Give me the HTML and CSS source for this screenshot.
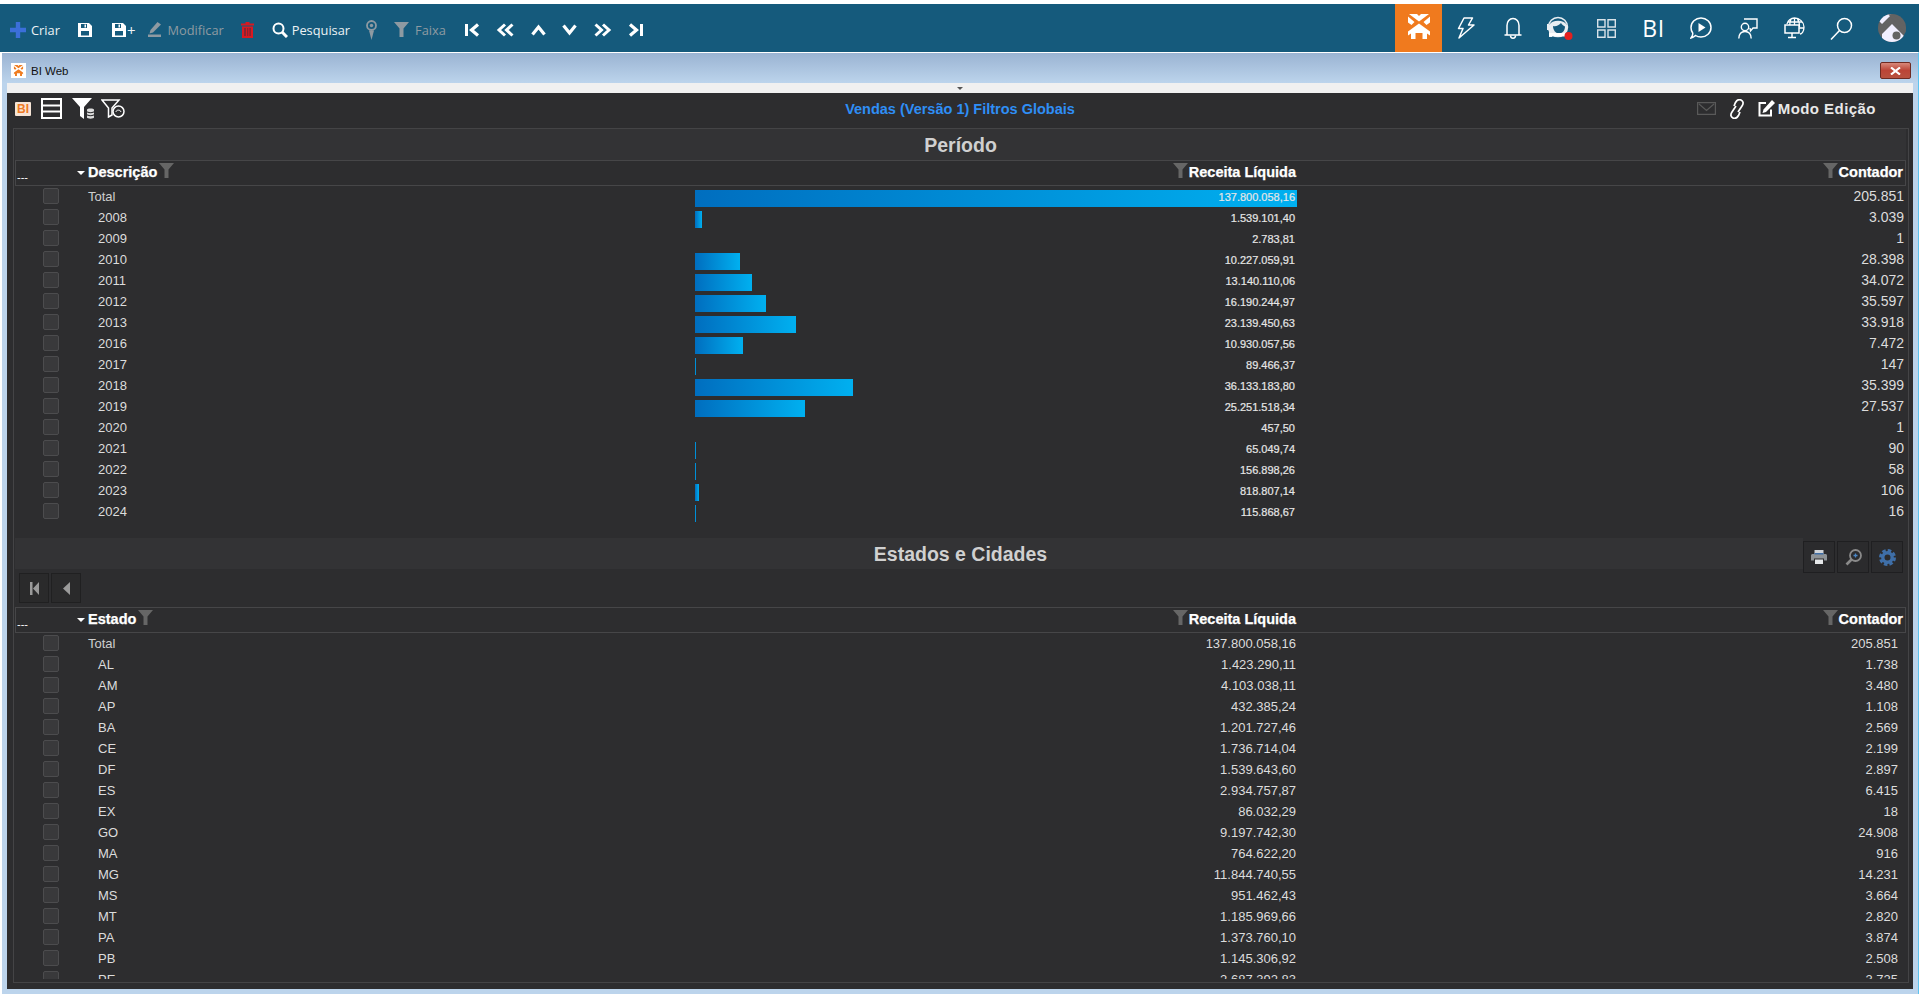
FILE: index.html
```html
<!DOCTYPE html>
<html lang="pt-BR">
<head>
<meta charset="utf-8">
<title>BI Web</title>
<link rel="stylesheet" href="styles.css">
</head>
<body>
<svg class="defs" aria-hidden="true">
  <symbol id="funnel" viewBox="0 0 15 15"><path d="M0 0H15L9.500 6.500V15H5.500V6.500Z"/></symbol>
  <symbol id="logo" viewBox="0 0 22 25"><path d="M1 0H9L11 2 13 0H21L11 7.500ZM0 2.500 6.500 8 3.500 11 0 8.500ZM22 2.500 15.500 8 18.500 11 22 8.500ZM11 9.500 22 17.500V21.500L19 19.500V25H14.500V19H7.500V25H3V19.500L0 21.500V17.500Z"/></symbol>
  <clipPath id="avatar-clip"><circle cx="14" cy="14" r="14"/></clipPath>
</svg>

<header class="toolbar">
  <div class="tb-left">
    <div class="tb-group">
      <svg class="ic" width="16" height="16" viewBox="0 0 16 16"><path fill="#3b6fd9" d="M5.800 0H10.200V5.800H16V10.200H10.200V16H5.800V10.200H0V5.800H5.800Z"/></svg>
      <span class="tb-text">Criar</span>
    </div>
    <svg class="ic" width="14" height="14" viewBox="0 0 14 14"><path fill="#fff" d="M0 0H11L14 3V14H0Z"/><path fill="#155a7c" d="M3 1H9V5H3ZM3 8H11V12.500H3Z"/><path fill="#fff" d="M6.500 1.500H8V4.500H6.500Z"/></svg>
    <div class="tb-group tight">
      <svg class="ic" width="14" height="14" viewBox="0 0 14 14"><path fill="#fff" d="M0 0H11L14 3V14H0Z"/><path fill="#155a7c" d="M3 1H9V5H3ZM3 8H11V12.500H3Z"/><path fill="#fff" d="M6.500 1.500H8V4.500H6.500Z"/></svg>
      <span class="tb-text plus">+</span>
    </div>
    <div class="tb-group muted tb-modify">
      <svg class="ic" width="13" height="15" viewBox="0 0 13 15"><path fill="#8e9aa2" d="M9.500 0 13 2.500 5 10.500 1.500 11.500 2.500 8ZM0 12.500H13V15H0Z"/></svg>
      <span class="tb-text">Modificar</span>
    </div>
    <svg class="ic" width="13" height="16" viewBox="0 0 13 16"><path fill="#d81921" d="M4.500 0H8.500V1.500H13V3.500H0V1.500H4.500ZM1 4.500H12V16H1Z"/><path fill="#8b2230" d="M3 6H5V14H3ZM6 6H7.300V14H6ZM8.300 6H10V14H8.300Z"/></svg>
    <div class="tb-group tb-search">
      <svg class="ic" width="16" height="16" viewBox="0 0 16 16"><circle cx="6.500" cy="6.500" r="5" fill="none" stroke="#fff" stroke-width="2"/><path d="M10 10 15 15" stroke="#fff" stroke-width="3"/></svg>
      <span class="tb-text">Pesquisar</span>
    </div>
    <svg class="ic tb-pin" width="11" height="20" viewBox="0 0 11 20"><circle cx="5.500" cy="5.500" r="4.500" fill="none" stroke="#8e9aa2" stroke-width="1.800"/><circle cx="5.500" cy="5.500" r="1.700" fill="#8e9aa2"/><path fill="#8e9aa2" d="M3 10.500H8L5.500 20Z"/></svg>
    <div class="tb-group muted tb-range">
      <svg class="ic funnel-bar" width="15" height="15"><use href="#funnel"/></svg>
      <span class="tb-text">Faixa</span>
    </div>
    <div class="tb-nav">
      <svg class="ic" width="15" height="14" viewBox="0 0 15 14"><path fill="#fff" d="M0 1H3V13H0Z"/><path d="M13 1.500 6.500 7 13 12.500" fill="none" stroke="#fff" stroke-width="3.200"/></svg>
      <svg class="ic" width="18" height="14" viewBox="0 0 18 14"><path d="M9 1.500 3 7 9 12.500M16.500 1.500 10.500 7 16.500 12.500" fill="none" stroke="#fff" stroke-width="3"/></svg>
      <svg class="ic" width="15" height="14" viewBox="0 0 15 14"><path d="M1.500 11.500 7.500 4 13.500 11.500" fill="none" stroke="#fff" stroke-width="3.200"/></svg>
      <svg class="ic" width="15" height="14" viewBox="0 0 15 14"><path d="M1.500 2.500 7.500 10 13.500 2.500" fill="none" stroke="#fff" stroke-width="3.200"/></svg>
      <svg class="ic" width="18" height="14" viewBox="0 0 18 14"><path d="M1.500 1.500 7.500 7 1.500 12.500M9 1.500 15 7 9 12.500" fill="none" stroke="#fff" stroke-width="3"/></svg>
      <svg class="ic" width="15" height="14" viewBox="0 0 15 14"><path fill="#fff" d="M12 1H15V13H12Z"/><path d="M2 1.500 8.500 7 2 12.500" fill="none" stroke="#fff" stroke-width="3.200"/></svg>
    </div>
  </div>
  <div class="tb-right">
    <div class="tb-cell home"><svg width="22" height="25" class="logo-white"><use href="#logo"/></svg></div>
    <div class="tb-cell"><svg width="18" height="22" viewBox="0 0 18 22" fill="none" stroke="#fff" stroke-width="1.500" stroke-linejoin="round"><path d="M7 1H15.500L11.500 8H17L2 21 6 11.500H1.500Z"/></svg></div>
    <div class="tb-cell"><svg width="18" height="23" viewBox="0 0 18 23" fill="none" stroke="#fff" stroke-width="1.500"><path d="M3 18V8.500C3 4.500 5.500 1.500 9 1.500S15 4.500 15 8.500V18M0.500 18H17.500"/><path d="M6.500 18.500C6.500 22 11.500 22 11.500 18.500"/></svg></div>
    <div class="tb-cell"><svg width="27" height="25" viewBox="0 0 27 25"><circle cx="12" cy="11" r="9.500" fill="none" stroke="#e9eef2" stroke-width="1.500"/><path fill="#e9eef2" d="M3 9C6 4 17 3 21 9V14L18 19H6V21H3ZM1 8H3V14H1Z"/><path fill="#155a7c" d="M7 10C10 11 13 9 15 7 16 9 18 10 19 10.500 19 15 16 17.500 13 17.500S7 14.500 7 10Z"/><path fill="#fff" d="M3 17H19V20.500H3Z"/><circle cx="22.500" cy="20" r="4" fill="#e4201f"/></svg></div>
    <div class="tb-cell"><svg width="19" height="19" viewBox="0 0 19 19" fill="none" stroke="#d8e2e8" stroke-width="1.400"><path d="M.7.700H8V8H.7ZM11 .7H18.300V8H11ZM.7 11H8V18.300H.7ZM11 11H18.300V18.300H11Z"/></svg></div>
    <div class="tb-cell"><span class="tb-bi">BI</span></div>
    <div class="tb-cell"><svg width="22" height="22" viewBox="0 0 22 22" fill="none" stroke="#fff" stroke-width="1.500"><path d="M11 1C16.500 1 21 5.300 21 10.500S16.500 20 11 20C9 20 7 19.500 5.500 18.500 4 20 2.500 20.800 1 21 2.500 19 3 17.500 2.700 16 1.600 14.500 1 12.500 1 10.500 1 5.300 5.500 1 11 1Z"/><path fill="#fff" stroke="none" d="M8.500 6 15.500 10.500 8.500 15Z"/></svg></div>
    <div class="tb-cell"><svg width="20" height="21" viewBox="0 0 20 21" fill="none" stroke="#fff" stroke-width="1.400"><path d="M6 1H19V10H15L12.500 13 12 10"/><circle cx="7" cy="9" r="3.700"/><path d="M.8 20.500C1 16 3.500 13.500 7 13.500S13 16 13.200 20.500"/></svg></div>
    <div class="tb-cell"><svg width="21" height="22" viewBox="0 0 21 22" fill="none" stroke="#fff" stroke-width="1.300"><path d="M3 7C3.500 3.500 7 1 10.500 1 15.500 1 20 5 20 10S17.500 17 16 17M7 2.500C6 4 5.800 6 5.800 8M13.500 2C15 4 15.500 7 15.500 10M4 5H18M14 11H20M10.500 1V8"/><path fill="#155a7c" stroke-width="1.500" d="M1 8H15V16H1Z"/><path stroke-width="1.500" d="M8 16V20M4 20.500H12"/></svg></div>
    <div class="tb-cell"><svg width="23" height="23" viewBox="0 0 23 23" fill="none" stroke="#fff" stroke-width="1.500"><circle cx="14.500" cy="8.500" r="7"/><path d="M9.500 13.500 1 22.500"/></svg></div>
    <div class="tb-cell avatar-cell"><svg width="28" height="28" viewBox="0 0 28 28"><circle cx="14" cy="14" r="14" fill="#636363"/><g clip-path="url(#avatar-clip)"><path fill="#f1efff" d="M7 0H14L4 10 0 6ZM14 10 28 24V28H4V20Z"/><path fill="#636363" d="M10 0H14L28 13V20Z"/></g><circle cx="18.500" cy="21.500" r="4" fill="#636363"/></svg></div>
  </div>
</header>

<div class="window">
  <div class="titlebar">
    <svg class="tab-logo" width="15" height="15" viewBox="0 0 15 15"><rect width="15" height="15" fill="#fff"/><svg x="2.500" y="2" width="10" height="11" class="logo-orange"><use href="#logo"/></svg></svg>
    <span class="tab-title">BI Web</span>
    <span class="close"><svg width="11" height="8" viewBox="0 0 11 8"><path d="M1 .5 10 7.500M10 .5 1 7.500" stroke="#fff" stroke-width="2.200"/></svg></span>
  </div>
  <div class="strip"><span class="caret-mini"></span></div>
  <main class="content">
    <div class="appbar">
      <div class="appbar-left">
        <span class="bi-badge">BI</span>
        <svg width="21" height="21" viewBox="0 0 21 21" fill="none" stroke="#fff" stroke-width="2"><path d="M1 1H20V20H1ZM1 7.500H20M1 13.500H20"/></svg>
        <svg class="app-fdb" width="23" height="21" viewBox="0 0 23 21"><path fill="#fff" d="M0 0H20L12 9V21L8 18V9Z"/><path fill="#ddd" d="M15 11.500C15 10 22 10 22 11.500V13C22 14.500 15 14.500 15 13ZM15 14.500C17 15.500 20 15.500 22 14.500V16C22 17.500 15 17.500 15 16ZM15 17.500C17 18.500 20 18.500 22 17.500V19.500C22 21 15 21 15 19.500Z"/></svg>
        <svg class="app-fcl" width="24" height="19" viewBox="0 0 24 19" fill="none" stroke="#fff" stroke-width="1.500"><path d="M1 1H18L11 9V16L7.500 18V9Z"/><circle fill="#2d2d2f" cx="17.500" cy="12.500" r="5.500"/><path stroke-width="1" d="M15 13C15 10.500 19.500 10.500 20 13"/></svg>
      </div>
      <div class="app-title">Vendas (Versão 1) Filtros Globais</div>
      <div class="appbar-right">
        <svg width="19" height="13" viewBox="0 0 19 13" fill="none" stroke="#595959" stroke-width="1.200"><path d="M.6.6H18.400V12.400H.6ZM2 2 9.500 8.500 17 2"/></svg>
        <svg width="16" height="20" viewBox="0 0 16 20" fill="none" stroke="#fff" stroke-width="1.700"><path d="M7 7 3 13C1 16 2 18 4 19S8 19 9.500 16.500L11 13"/><path d="M9 13 13 7C15 4 14 2 12 1S8 1 6.500 3.500L5 7"/></svg>
        <span class="edit-mode">
          <svg width="17" height="17" viewBox="0 0 17 17"><path fill="none" stroke="#fff" stroke-width="2" d="M13 9.500V15.500H1.500V3H8"/><path fill="#fff" d="M14 0 17 3 8 12 4.500 13 5.500 9.500Z"/></svg>
          Modo Edição
        </span>
      </div>
    </div>

    <div class="panel">
      <h2 class="panel-title">Período</h2>
      <div class="thead">
        <div class="th-first"><span class="dots">---</span><span class="sort"></span></div>
        <div class="th-name">Descrição<svg class="th-f" width="15" height="15"><use href="#funnel"/></svg></div>
        <div class="th-num"><svg class="th-f" width="15" height="15"><use href="#funnel"/></svg>Receita Líquida</div>
        <div class="th-num"><svg class="th-f" width="15" height="15"><use href="#funnel"/></svg>Contador</div>
      </div>
      <div class="tbody period">
        <div class="row total"><span class="cb"></span><span class="name">Total</span><span class="val"><span class="bar" style="width:602px"></span><em>137.800.058,16</em></span><span class="cnt">205.851</span></div>
        <div class="row"><span class="cb"></span><span class="name">2008</span><span class="val"><span class="bar" style="width:7px"></span><em>1.539.101,40</em></span><span class="cnt">3.039</span></div>
        <div class="row"><span class="cb"></span><span class="name">2009</span><span class="val"><em>2.783,81</em></span><span class="cnt">1</span></div>
        <div class="row"><span class="cb"></span><span class="name">2010</span><span class="val"><span class="bar" style="width:45px"></span><em>10.227.059,91</em></span><span class="cnt">28.398</span></div>
        <div class="row"><span class="cb"></span><span class="name">2011</span><span class="val"><span class="bar" style="width:57px"></span><em>13.140.110,06</em></span><span class="cnt">34.072</span></div>
        <div class="row"><span class="cb"></span><span class="name">2012</span><span class="val"><span class="bar" style="width:71px"></span><em>16.190.244,97</em></span><span class="cnt">35.597</span></div>
        <div class="row"><span class="cb"></span><span class="name">2013</span><span class="val"><span class="bar" style="width:101px"></span><em>23.139.450,63</em></span><span class="cnt">33.918</span></div>
        <div class="row"><span class="cb"></span><span class="name">2016</span><span class="val"><span class="bar" style="width:48px"></span><em>10.930.057,56</em></span><span class="cnt">7.472</span></div>
        <div class="row"><span class="cb"></span><span class="name">2017</span><span class="val"><span class="bar" style="width:1px"></span><em>89.466,37</em></span><span class="cnt">147</span></div>
        <div class="row"><span class="cb"></span><span class="name">2018</span><span class="val"><span class="bar" style="width:158px"></span><em>36.133.183,80</em></span><span class="cnt">35.399</span></div>
        <div class="row"><span class="cb"></span><span class="name">2019</span><span class="val"><span class="bar" style="width:110px"></span><em>25.251.518,34</em></span><span class="cnt">27.537</span></div>
        <div class="row"><span class="cb"></span><span class="name">2020</span><span class="val"><em>457,50</em></span><span class="cnt">1</span></div>
        <div class="row"><span class="cb"></span><span class="name">2021</span><span class="val"><span class="bar" style="width:1px"></span><em>65.049,74</em></span><span class="cnt">90</span></div>
        <div class="row"><span class="cb"></span><span class="name">2022</span><span class="val"><span class="bar" style="width:1px"></span><em>156.898,26</em></span><span class="cnt">58</span></div>
        <div class="row"><span class="cb"></span><span class="name">2023</span><span class="val"><span class="bar" style="width:4px"></span><em>818.807,14</em></span><span class="cnt">106</span></div>
        <div class="row"><span class="cb"></span><span class="name">2024</span><span class="val"><span class="bar" style="width:1px"></span><em>115.868,67</em></span><span class="cnt">16</span></div>
      </div>

      <div class="band">
        <h2 class="panel-title band-title">Estados e Cidades</h2>
        <div class="band-tools">
          <button class="tool"><svg width="16" height="14" viewBox="0 0 16 14"><path fill="#cfd3d8" d="M3.500 0H12.500V4H3.500Z"/><path fill="#8d9296" d="M1.500 4H14.500C15.300 4 16 4.700 16 5.500V10.500H13V8.500H3V10.500H0V5.500C0 4.700.7 4 1.500 4Z"/><path fill="#3f6fa8" d="M3.500 3H12.500V4.500H3.500Z"/><path fill="#e6e8ea" d="M4 9.500H12V14H4Z"/></svg></button>
          <button class="tool"><svg width="17" height="17" viewBox="0 0 17 17" fill="none"><circle cx="10.500" cy="6.500" r="5.500" stroke="#8a8a8a" stroke-width="1.800"/><path d="M6.500 10.500 1.500 15.500" stroke="#8a8a8a" stroke-width="2.600"/><path d="M8.500 6.500H12.500M10.500 4.500V8.500" stroke="#4a86c5" stroke-width="1.300"/></svg></button>
          <button class="tool"><svg width="17" height="17" viewBox="0 0 17 17" fill="none" stroke="#3f6fa8"><circle cx="8.500" cy="8.500" r="4.700" stroke-width="3.400"/><circle cx="8.500" cy="8.500" r="7" stroke-width="3" stroke-dasharray="3.500 2"/></svg></button>
        </div>
      </div>
      <div class="pager">
        <button class="page-btn"><svg width="9" height="13" viewBox="0 0 9 13"><path fill="#9a9a9a" d="M0 0H2.500V13H0ZM9 0V13L3 6.500Z"/></svg></button>
        <button class="page-btn"><svg width="7" height="13" viewBox="0 0 7 13"><path fill="#9a9a9a" d="M7 0V13L0 6.500Z"/></svg></button>
      </div>
      <div class="thead">
        <div class="th-first"><span class="dots">---</span><span class="sort"></span></div>
        <div class="th-name">Estado<svg class="th-f" width="15" height="15"><use href="#funnel"/></svg></div>
        <div class="th-num"><svg class="th-f" width="15" height="15"><use href="#funnel"/></svg>Receita Líquida</div>
        <div class="th-num"><svg class="th-f" width="15" height="15"><use href="#funnel"/></svg>Contador</div>
      </div>
      <div class="tbody states">
        <div class="row total"><span class="cb"></span><span class="name">Total</span><span class="num">137.800.058,16</span><span class="cnt">205.851</span></div>
        <div class="row"><span class="cb"></span><span class="name">AL</span><span class="num">1.423.290,11</span><span class="cnt">1.738</span></div>
        <div class="row"><span class="cb"></span><span class="name">AM</span><span class="num">4.103.038,11</span><span class="cnt">3.480</span></div>
        <div class="row"><span class="cb"></span><span class="name">AP</span><span class="num">432.385,24</span><span class="cnt">1.108</span></div>
        <div class="row"><span class="cb"></span><span class="name">BA</span><span class="num">1.201.727,46</span><span class="cnt">2.569</span></div>
        <div class="row"><span class="cb"></span><span class="name">CE</span><span class="num">1.736.714,04</span><span class="cnt">2.199</span></div>
        <div class="row"><span class="cb"></span><span class="name">DF</span><span class="num">1.539.643,60</span><span class="cnt">2.897</span></div>
        <div class="row"><span class="cb"></span><span class="name">ES</span><span class="num">2.934.757,87</span><span class="cnt">6.415</span></div>
        <div class="row"><span class="cb"></span><span class="name">EX</span><span class="num">86.032,29</span><span class="cnt">18</span></div>
        <div class="row"><span class="cb"></span><span class="name">GO</span><span class="num">9.197.742,30</span><span class="cnt">24.908</span></div>
        <div class="row"><span class="cb"></span><span class="name">MA</span><span class="num">764.622,20</span><span class="cnt">916</span></div>
        <div class="row"><span class="cb"></span><span class="name">MG</span><span class="num">11.844.740,55</span><span class="cnt">14.231</span></div>
        <div class="row"><span class="cb"></span><span class="name">MS</span><span class="num">951.462,43</span><span class="cnt">3.664</span></div>
        <div class="row"><span class="cb"></span><span class="name">MT</span><span class="num">1.185.969,66</span><span class="cnt">2.820</span></div>
        <div class="row"><span class="cb"></span><span class="name">PA</span><span class="num">1.373.760,10</span><span class="cnt">3.874</span></div>
        <div class="row"><span class="cb"></span><span class="name">PB</span><span class="num">1.145.306,92</span><span class="cnt">2.508</span></div>
        <div class="row"><span class="cb"></span><span class="name">PE</span><span class="num">2.687.392,83</span><span class="cnt">3.725</span></div>
      </div>
    </div>
  </main>
</div>
</body>
</html>
```

FILE: styles.css
```css
* { box-sizing: border-box; }
html, body { margin: 0; height: 994px; overflow: hidden; }
body {
  background: #fff;
  padding-top: 4px;
  font-family: "Liberation Sans", Arial, sans-serif;
  display: flex;
  flex-direction: column;
}
.defs { position: absolute; width: 0; height: 0; }

/* top application toolbar */
.toolbar {
  height: 48px;
  flex: none;
  background: #155a7c;
  display: flex;
  justify-content: space-between;
  padding: 0 7px 0 10px;
}
.tb-left { display: flex; align-items: center; gap: 18px; padding-top: 3px; }
.tb-group { display: flex; align-items: center; gap: 5px; }
.tb-group.tight { gap: 1px; margin-right: -5px; margin-left: 2px; }
.tb-group.muted { gap: 6px; }
.tb-modify { margin-right: -1px; }
.tb-group.tb-search { gap: 4px; margin-right: -2px; }
.tb-pin { margin-right: -1px; }
.tb-range { margin-right: 1px; }
.tb-text { font: 12.800px "Open Sans", sans-serif; color: #edf2f5; }
.tb-text.plus { font-size: 15px; }
.muted .tb-text { color: #8e9aa2; }
.funnel-bar { fill: #8e9aa2; }
.ic { display: block; flex: none; }
.tb-nav { display: flex; align-items: center; gap: 16.500px; }
.tb-right { display: flex; }
.tb-cell { width: 47px; display: flex; align-items: center; justify-content: center; }
.tb-cell.home { background: #f07a1e; padding-bottom: 3px; }
.logo-white { fill: #fff; }
.logo-orange { fill: #ef7d22; }
.tb-bi { font: 400 23px "Open Sans", sans-serif; color: #fff; letter-spacing: .5px; }
.avatar-cell { padding-left: 6px; }

/* window chrome */
.window {
  flex: 1;
  min-height: 0;
  margin-left: 2px;
  border-top: 1px solid #fff;
  border-right: 1px solid #5cc3ef;
  background: #bcd4ec;
  padding: 0 5px 5px 5px;
  display: flex;
  flex-direction: column;
}
.titlebar {
  height: 30px;
  flex: none;
  margin: 0 -5px;
  padding: 5px 7px 0 9px;
  background: linear-gradient(#9ab3d2, #bcd4ec);
  display: flex;
  align-items: center;
}
.tab-title { font-size: 11.500px; color: #111; margin-left: 5px; }
.tab-logo { flex: none; }
.close {
  margin-left: auto;
  width: 31px;
  height: 17px;
  border: 1px solid #6e2a22;
  border-radius: 2px;
  background: linear-gradient(#d8887a, #bb4436 50%, #b8513f);
  display: flex;
  align-items: center;
  justify-content: center;
}
.strip {
  height: 10px;
  flex: none;
  background: #f0f0f0;
  display: flex;
  justify-content: center;
  align-items: center;
}
.caret-mini {
  width: 0;
  height: 0;
  border: 3px solid transparent;
  border-top: 3px solid #555;
  border-bottom: 0;
}

.content {
  flex: 1;
  min-height: 0;
  background: #2d2d2f;
  padding: 0 4px 6px 6px;
  display: flex;
  flex-direction: column;
  color: #dcdcdc;
}

.appbar {
  height: 35px;
  flex: none;
  display: grid;
  grid-template-columns: 1fr auto 1fr;
  align-items: center;
  margin: 0 -4px 0 -6px;
  padding-bottom: 4px;
}
.appbar-left { display: flex; align-items: center; padding-left: 8px; gap: 10px; }
.bi-badge {
  width: 16px;
  height: 14px;
  background: #f6e4d6;
  color: #ee7a26;
  font: bold 12px/14px "Liberation Sans", sans-serif;
  text-align: center;
  border-radius: 1px;
}
.app-fcl { margin-left: -4px; }
.app-title { font-size: 14.500px; font-weight: bold; color: #2f8ff6; }
.appbar-right { display: flex; align-items: center; justify-content: flex-end; gap: 13px; padding-right: 37px; }
.edit-mode {
  display: flex;
  align-items: center;
  gap: 3px;
  color: #e9e9e9;
  font: bold 15px "Liberation Sans", sans-serif;
  letter-spacing: .45px;
}

/* panel */
.panel {
  flex: 1;
  min-height: 0;
  border: 1px solid #444446;
  padding: 0 2px 0 1px;
  display: flex;
  flex-direction: column;
  overflow: hidden;
}
.panel-title {
  margin: 0;
  height: 31px;
  background: #333335;
  text-align: center;
  font-size: 19.500px;
  line-height: 32px;
  font-weight: bold;
  color: #d0d0d0;
  flex: none;
}
.thead {
  flex: none;
  height: 26px;
  border: 1px solid #464648;
  display: grid;
  grid-template-columns: 72px 607px 602px 1fr;
  font-size: 14.500px;
  font-weight: bold;
  line-height: 23px;
  color: #fff;
  -webkit-text-stroke: .25px #fff;
}
.th-first { display: flex; justify-content: space-between; align-items: flex-start; padding: 0 3px 0 1px; }
.dots { font-size: 11px; font-weight: normal; margin-top: 5px; -webkit-text-stroke: 0; }
.sort {
  margin-top: 10px;
  border: 4px solid transparent;
  border-top: 4px solid #fff;
  border-bottom: 0;
}
.th-name { display: flex; align-items: flex-start; gap: 2px; }
.th-num { display: flex; justify-content: flex-end; align-items: flex-start; padding-right: 1px; gap: 1px; }
.th-num:last-child { padding-right: 2px; gap: 1px; }
.th-f { fill: #666; margin-top: 2px; flex: none; }

.tbody { flex: none; }
.tbody.period { height: 336px; margin-bottom: 16px; }
.tbody.states { height: 346px; overflow: hidden; }
.row {
  height: 21px;
  display: grid;
  grid-template-columns: 73px 607px 602px 1fr;
  font-size: 13px;
  line-height: 21px;
  color: #dcdcdc;
}
.cb {
  width: 16px;
  height: 16px;
  margin: 2px 0 0 28px;
  background: #39393b;
  border: 1px solid #4c4c4e;
  border-radius: 2px;
}
.name { padding-left: 10px; }
.total .name { padding-left: 0; color: #cfcfcf; }
.val { display: grid; height: 21px; }
.val > * { grid-area: 1 / 1; }
.bar {
  height: 17px;
  margin-top: 4px;
  background: linear-gradient(90deg, #006ebf, #00b0f0);
}
.val em {
  font-style: normal;
  font-size: 11px;
  text-align: right;
  padding-right: 2px;
  color: #e6e6e6;
  line-height: 22px;
  -webkit-text-stroke: .2px #e6e6e6;
}
.num { text-align: right; padding-right: 1px; }
.cnt { text-align: right; padding-right: 8px; }
.period .cnt { font-size: 14px; padding-right: 2px; }

.band { flex: none; height: 31px; display: grid; grid-template-columns: 1fr 103px; }
.band-title { padding-left: 103px; }
.band-tools { display: flex; gap: 2px; justify-content: flex-end; padding-right: 3px; margin-top: 3px; height: 32px; }
.tool {
  width: 32px;
  height: 32px;
  padding: 0;
  background: #2b2b2d;
  border: 1px solid #1f1f21;
  display: flex;
  align-items: center;
  justify-content: center;
}
.pager { flex: none; display: flex; gap: 2px; margin: 4px 0 4px 4px; height: 30px; }
.page-btn {
  width: 30px;
  height: 30px;
  padding: 0;
  background: #2a2a2b;
  border: 1px solid #202021;
  display: flex;
  align-items: center;
  justify-content: center;
}
```
